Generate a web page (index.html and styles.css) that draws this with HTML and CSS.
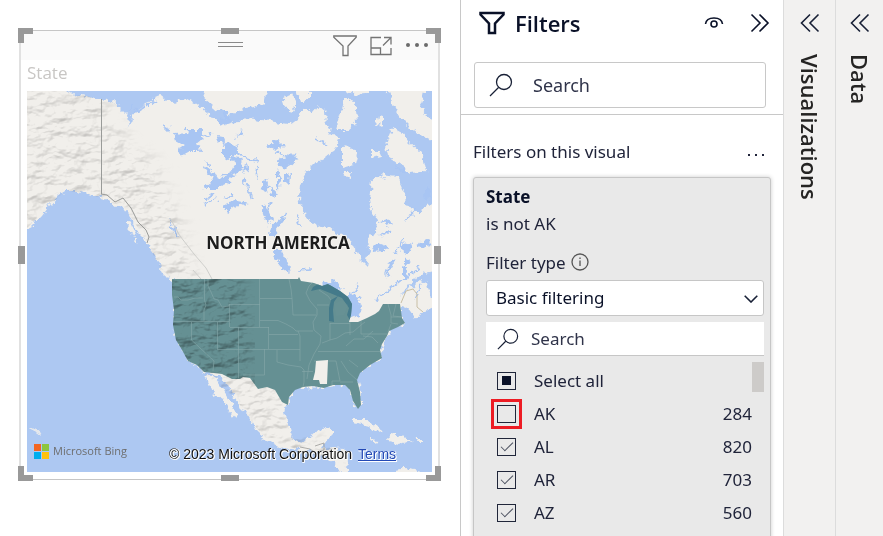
FILE: index.html
```html
<!DOCTYPE html>
<html lang="en">
<head>
<meta charset="utf-8">
<title>State filter</title>
<link rel="stylesheet" href="styles.css">
</head>
<body>
<div class="app">
  <main class="report">
    <section class="visual" aria-label="State map">
      <header class="visual-header">
        <span class="grip"></span>
        <div class="visual-tools">
          <button type="button" aria-label="Filters"><svg width="24" height="22" viewBox="0 0 24 22"><path d="M.8 1h22.4v1.2L15 11v9.5h-5V11L.8 2.200z"/></svg></button>
          <button type="button" aria-label="Focus mode"><svg width="22" height="20" viewBox="0 0 22 20"><path d="M11 1.500H1v17h20V12M1 12h9.500v6.500M13 9.500l8-8M14 1.500h7v7"/></svg></button>
          <button type="button" aria-label="More options"><svg class="dots" width="24" height="20" viewBox="0 0 24 20"><circle cx="3" cy="9" r="2"/><circle cx="12" cy="9" r="2"/><circle cx="21" cy="9" r="2"/></svg></button>
        </div>
      </header>
      <h2 class="visual-title">State</h2>
      <div class="map">
        <svg class="map-art" viewBox="27 91 405 381" preserveAspectRatio="xMidYMid slice">
          <defs>
            <filter id="coast" x="0" y="0" width="100%" height="100%">
              <feTurbulence type="fractalNoise" baseFrequency=".16" numOctaves="3" seed="4" result="n"/>
              <feDisplacementMap in="SourceGraphic" in2="n" scale="9" xChannelSelector="R" yChannelSelector="G"/>
            </filter>
            <filter id="relief" x="0" y="0" width="100%" height="100%" color-interpolation-filters="sRGB">
              <feTurbulence type="fractalNoise" baseFrequency=".05 .09" numOctaves="4" seed="8" result="n"/>
              <feDiffuseLighting in="n" surfaceScale="6" diffuseConstant="1.15" lighting-color="#fff" result="l"><feDistantLight azimuth="235" elevation="60"/></feDiffuseLighting>
              <feColorMatrix in="l" type="saturate" values="0" result="g"/>
              <feGaussianBlur in="SourceAlpha" stdDeviation="8" result="a"/>
              <feComposite in="g" in2="a" operator="in"/>
            </filter>
            <clipPath id="land"><path d="M27 91H67L90 97 112 101 127 115 129 128 148 103 162 95 190 100 230 279H172L160 268 146 240 125 208 95 196 66 190 50 205 27 228Z"/></clipPath>
            <clipPath id="mex"><path d="M203 373 222 374 232 379 243 377 250 378 258 388 267 387 275 390 288 405 286 420 293 440 318 434 330 427 322 447 345 449 346 472 335 463 300 450 268 440 254 425 235 398Z"/></clipPath>
            <clipPath id="usa"><path id="usa-shape" d="M172 279H298L299 277 301 281 314 283 322 286 328 284 340 291 348 297 352 304 351 315 349 322 358 322 367 318 375 314 379 311 383 304H400L402 318 405 323 398 327 389 331 387 336 382 344 380 350 382 358 370 365 360 373 357 380 360 392 361 405 358 409 353 401 350 390 345 385 333 385 324 388 313 386 303 387 295 390 289 397 288 405 282 402 275 390 267 387 258 389 250 378 243 377 240 379 232 379 222 374 214 373 204 372 197 365 188 361 182 350 176 340 173 325 174 310 172 295Z"/></clipPath>
          </defs>
          <rect x="27" y="91" width="405" height="381" fill="#adc8f2"/>
          <g filter="url(#coast)">
            <g fill="#f1efeb">
              <path d="M15 80H60L67 91 80 95 90 97 101 99 112 101 120 108 127 115 129 128 131 118 140 108 148 103 155 97 160 95 165 99 172 102 186 99 196 104 203 110 212 117 220 122 240 121 247 118 262 120 275 122 290 124 298 118 305 107 312 113 318 106 325 112 326 125 332 133 340 137 335 150 325 158 316 162 308 170 303 176 300 184 299 200 303 207 308 220 318 225 330 228 340 235 350 240 357 253 362 262 366 266 369 250 368 238 377 232 378 220 372 212 370 200 372 180 378 176 384 180 392 177 400 184 405 195 406 205 412 212 420 212 428 205 440 203V270L425 273 415 279 408 287 401 297 410 288 420 280 427 284 430 297 440 296V305L425 312 415 318 408 308 402 306 402 318 405 323 389 331 381 350 382 358 360 372 357 380 361 392 361 405 357 408 348 387 341 385 324 388 303 387 295 390 289 398 285 412 290 430 293 440 300 442 312 437 318 430 332 427 332 432 327 440 322 448 345 449 348 460 346 480H344L335 463 318 452 300 450 282 448 268 440 260 436 254 425 245 412 235 398 228 385 220 376 203 372 197 365 188 360 182 348 176 338 174 325 175 310 174 295 174 281 165 276 160 268 157 258 150 248 146 240 138 232 132 220 125 210 117 206 105 199 95 196 85 193 75 190 66 190 58 196 50 205 42 216 33 225 15 234Z"/>
              <path d="M203 97 208 85H268L265 101 255 107 240 110 230 115 222 112 213 106ZM284 98l8-4 4 8-3 10-7-2zM297 90l14 1 0 8-10 3zM345 98l8 2 3 9 1 14-8 7-13 0 4-14zM378 115l6 1 0 8-8 2zM342 148l8-2 8 9-2 8-14 4zM385 87H425L421 106 427 117 440 124V145L424 136 410 128 400 118 394 107ZM393 128 402 133 409 142 422 154 426 171 411 173 402 166 388 156 386 145ZM340 85h28v9l-15 1zM206 376l9 2 8 11 8 14 7 15-5-2-11-17-9-6zM371 151l8 0 2 5-10 2zM345 172l7 0-2 7-7-2zM378 175l20 2 6 12-9-2z"/>
              <path d="M353 419l12 0 11 7 8 5-8 1-8-7-15-3zM390 434l11 2 11 5-14 3-9-2zM369 439l9 1-2 3-8-2zM418 439h5v3h-6zM385 208l-4 5 7 2zM396 470l10-2 14 4-24 6z"/>
              <path d="M29 426l9 3 4 7-5-2z" opacity=".8"/>
              <path d="M126 222l6 2 4 12-6-4zM133 236l5 10-5-6zM157 265l12 9 5 7-13-8z"/>
            </g>
            <g fill="#a8c5f3">
              <path d="M174 134l12-1 2-3 14 0 0 9-5 4 3 8-10 0-9 5-3-6 7-4-9-5zM163 124l6 3 4 7-5-2zM217 135l5 1 3 9-6-3zM219 120l6-1-3-8h6l2 12-9 3zM203 166l8 3 9 14-10-7zM202 188l8-3 3-8 8 2 7-6 9 2-10 7-8 6-9 0zM223 205l14-4 11 2-14 4-7 5zM261 207l8 3 4 9-6 6zM271 226l12-10 2 4-8 7-3 9-5-1zM275 250l8 0 3 10 6 9-3 4-9-8-7-10zM284 262l3 10-5-2zM224 146l7-3 8 5-6 8-9 3zM240 130l4 5-7 3zM268 145l9-4 7 5-7 5zM277 159l12-4 9 3-9 10-8-1zM260 184l6-6 3 9-4 6zM277 170l4 7-1 13-3-5zM231 157l10 1 3 10-8 1zM247 164l3 8-8 2zM270 188l8 4-2 7-4-4zM285 173l5 1-1 9-4 1zM221 176l15-9 8 3-12 4zM322 282l13-1 8 8-6 3-14-2zM349 292l8 5 5 9-2 9-9 3-4-13zM372 247l10-3 8 3-8 4-9 1zM401 247l8-6 4 3-4 11-7-1zM418 243l10-2 4 4-11 3zM404 257l7 4-3 6-4-4zM388 267l4-8 4-1-6 12-4 9zM402 267l5 1-1 12-4-2zM380 222l10-3 4 4-8 2zM424 191l3-5 4 10-6 6z"/>
              <g stroke="#a8c5f3" stroke-width="1.600" fill="none"><path d="M147 106l8-7M125 111l9-5M164 128l6 6M204 206l13-8M224 198l9-4M170 219l7 16M145 106l-9 6M200 138l13-6M222 145l10 2M206 161l5 5M242 179l7 8 2 11M258 166l-2 12M287 159l8-5M244 157l14 4M262 205l5 8M286 213l-5 11M275 153l18 3M315 138l11 7M237 151l5 5M380 236l10-5M415 210l-8 10M404 240l-10 14M422 285l-9 14M396 168l13 3M360 286l-8 6M375 300l25-19 20-14M270 200l-3 12M214 193l-9 7M296 215l4 12M300 270l12-1"/></g>
            </g>
          </g>
          <g class="relief" clip-path="url(#land)"><path filter="url(#relief)" d="M0 85H95L130 145 155 160 180 220 205 300H150L120 210 60 240H0Z"/></g>
          <g class="relief" clip-path="url(#mex)"><path filter="url(#relief)" d="M190 360H290L295 435 350 445V472H290L250 440Z"/></g>
          <path class="border" d="M101.500 99V194M101 194l6 1 8 7 8-4 8 10 7 14 8 8 3 7-2 6"/>
          <path class="range" d="M170 218l10 18 14 18 12 14 6 11M193 270l8 9"/>
          <path class="border gold" d="M401 303l5-12 7-2 4 5 0 13 6 5"/>
          <use href="#usa-shape" fill="#659093"/>
          <g class="relief us" clip-path="url(#usa)"><path filter="url(#relief)" d="M150 260H235L250 310 255 400H150Z"/></g>
          <g clip-path="url(#usa)">
            <path fill="#447a8a" d="M313 287l9-5 14 5 12 8 7 12-4 15-4-7 2-7-7-10-12-5-10-4-9 2zM331 300l7-4-4 6-1 8 1 12-5-1 0-13z"/>
            <path fill="#6d9598" d="M334 304l8-4 6 5-4 10-8 1z" opacity=".3"/>
            <path class="states" d="M174 297l4 0 3 3 7 0 7-2H203M204.500 279V300L206 305 204 310V321M208 279v7l3 6 3 7 4 1 4 7 7-1V304M229.500 304V327M173 321.500H229M191.500 322V340L214 361 213 371M217.500 322V349M217 349.500H300M229 304.500H260M259.500 279V327M260 298.500H292M230 327.500H269M268.500 327V349M238.500 327V378M264.500 349V375H243M289 279l2 10 1 9 1 17M260 320.500H278L286 324 293 328M293 315H316M293 328l3 3H313M269 334.500H298M298 331l2 5 0 25M277 350V362L288 365 301 367M301 367l3 3V382L303 387M302 371.500H313M316 279l-7 7-3 7 4 8 7 8 0 6-4 7 1 8 7 6-1 8-6 10-5 11-2 14M319 290l9 6 3 4M317 305H329M330 323V340M330 323.500H350M350 322V335M322 343l8-3 7-2 8-5 8-1 8-7 4-3M318 351.500H381M314 361H336L340 381H332V385M341 361l7 11 9 8M349 360l9 7M346 346l8-7 10 0 9-8M361 321V334H388M363 336l9 1 6 6M388 304l3 11 0 8 7 1M396 304l-3 12 9 1M391 317H401M391 324l-3 8M340 382H353"/>
          </g>
          <path fill="#f1efeb" d="M316 361 328 360 327 384 320 384 319 380 313 380 315 372Z"/>
          <path fill="none" stroke="#9a9a98" stroke-width=".8" d="M315 446l9-3v7l-7 2M300 447l10 2 9 6"/>
          <text class="continent" x="278" y="249" text-anchor="middle">NORTH AMERICA</text>
        </svg>
        <footer class="map-footer">
          <span class="brand"><svg width="15" height="15" viewBox="0 0 15 15"><path fill="#f26522" d="M0 0h7v7H0z"/><path fill="#8dc63f" d="M8 0h7v7H8z"/><path fill="#00aeef" d="M0 8h7v7H0z"/><path fill="#ffc20e" d="M8 8h7v7H8z"/></svg>Microsoft Bing</span>
          <span class="credit">© 2023 Microsoft Corporation <a href="#terms">Terms</a></span>
        </footer>
      </div>
      <i class="handle corner tl"></i><i class="handle corner tr"></i><i class="handle corner bl"></i><i class="handle corner br"></i>
      <i class="handle bar top"></i><i class="handle bar bottom"></i><i class="handle side left"></i><i class="handle side right"></i>
    </section>
  </main>

  <aside class="filters">
    <header class="pane-header">
      <svg class="funnel" width="26" height="24" viewBox="0 0 26 24"><path d="M1.500 2h23v1.500L16 12.500V22h-6v-9.500L1.500 3.500z"/></svg>
      <h1>Filters</h1>
      <button type="button" aria-label="Show filter pane to readers"><svg width="20" height="14" viewBox="0 0 20 14"><path d="M1.500 8C2 4 5.500 2 10 2s8 2 8.500 6"/><circle cx="10" cy="8" r="3"/></svg></button>
      <button type="button" aria-label="Collapse filters"><svg width="20" height="20" viewBox="0 0 20 20"><path d="M1.500 1.500 10 10l-8.500 8.500M9.500 1.500 18 10l-8.500 8.500"/></svg></button>
    </header>
    <div class="pane-search">
      <label class="search">
        <svg width="24" height="24" viewBox="0 0 24 24"><circle cx="15" cy="9" r="7.500"/><path d="M9.500 14.500 1 23"/></svg>
        <input type="search" placeholder="Search" aria-label="Search filters">
      </label>
    </div>
    <div class="section-head">
      <h2>Filters on this visual</h2>
      <button type="button" aria-label="More filter options"><svg class="dots" width="18" height="4" viewBox="0 0 18 4"><path d="M1 1h2v2H1zM8 1h2v2H8zM15 1h2v2h-2z"/></svg></button>
    </div>
    <section class="card">
      <h3>State</h3>
      <p class="summary">is not AK</p>
      <div class="type-label"><label for="filter-type">Filter type</label>
        <svg width="18" height="18" viewBox="0 0 18 18"><circle cx="9" cy="9" r="8"/><path d="M9 7.500V13M9 4.500V6"/></svg></div>
      <div class="type">
        <select id="filter-type"><option>Basic filtering</option><option>Advanced filtering</option><option>Top N</option></select>
        <svg width="14" height="8" viewBox="0 0 14 8"><path d="M.7.700 7 7 13.300.700"/></svg>
      </div>
      <label class="search value-search">
        <svg width="22" height="22" viewBox="0 0 24 24"><circle cx="15" cy="9" r="7.500"/><path d="M9.500 14.500 1 23"/></svg>
        <input type="search" placeholder="Search" aria-label="Search values">
      </label>
      <div class="values">
        <ul>
          <li><label><input type="checkbox" class="partial">Select all</label></li>
          <li><label><input type="checkbox" class="marked">AK</label><span>284</span></li>
          <li><label><input type="checkbox" checked>AL</label><span>820</span></li>
          <li><label><input type="checkbox" checked>AR</label><span>703</span></li>
          <li><label><input type="checkbox" checked>AZ</label><span>560</span></li>
        </ul>
        <i class="thumb"></i>
      </div>
    </section>
  </aside>

  <button type="button" class="rail"><svg width="20" height="20" viewBox="0 0 20 20"><path d="M10 1.500 1.500 10l8.500 8.500M18.500 1.500 10 10l8.500 8.500"/></svg><span>Visualizations</span></button>
  <button type="button" class="rail"><svg width="20" height="20" viewBox="0 0 20 20"><path d="M10 1.500 1.500 10l8.500 8.500M18.500 1.500 10 10l8.500 8.500"/></svg><span>Data</span></button>
</div>
</body>
</html>
```
FILE: styles.css
```css
* { box-sizing: border-box; }
body {
  margin: 0;
  background: #fff;
  color: #20243a;
  font: 17px/27px "Noto Sans", "Open Sans", sans-serif;
}
h1, h2, h3, p, ul { margin: 0; padding: 0; font: inherit; }
ul { list-style: none; }
button { border: 0; padding: 0; background: none; font: inherit; color: inherit; }
svg { display: block; flex: none; fill: none; stroke: #182036; stroke-width: 1.3; }
.dots { fill: currentColor; stroke: none; }

.app { display: flex; height: 100vh; overflow: hidden; }

/* Report canvas */
.report { flex: 1; min-width: 0; padding: 30px 20px 0 19px; }
.visual {
  position: relative;
  border: 2px solid #e1e1e1;
  border-width: 1px 2px;
  border-top-color: #c6c6c6;
  border-bottom-color: #c6c6c6;
  padding-bottom: 7px;
}
.visual-header {
  position: relative;
  display: flex;
  justify-content: flex-end;
  height: 29px;
  padding-right: 9px;
  background: #fafafa;
}
.grip {
  position: absolute;
  left: 50%;
  top: 11px;
  width: 25px;
  height: 5px;
  margin-left: -12px;
  border: solid #8a8a8a;
  border-width: 1px 0;
}
.visual-tools { display: flex; align-items: center; gap: 13px; color: #6b6b6b; }
.visual-tools svg { stroke: #747474; }
.visual-tools .dots { stroke: none; }
.visual-title {
  height: 31px;
  padding-left: 6px;
  color: #c8c6c4;
  font: 17px/26px "Open Sans", sans-serif;
}
.map { position: relative; margin: 0 6px; aspect-ratio: 405 / 381; overflow: hidden; }
.map-art { width: 100%; height: 100%; stroke: none; }
.relief { fill: #000; mix-blend-mode: multiply; opacity: .2; }
.relief.us { opacity: .4; }
.border, .range { fill: none; stroke: #999b99; stroke-width: 1; }
.range { stroke: #cfcfcc; }
.gold { stroke: #c9bfa5; }
.states { fill: none; stroke: #86a8aa; stroke-width: .6; }
.continent { font: 700 17px "Noto Sans", sans-serif; fill: #1d1d1d; stroke: #f6f5f2; stroke-width: 2px; paint-order: stroke; }
.map-footer {
  position: absolute;
  inset: auto 0 0 0;
  display: flex;
  align-items: center;
  gap: 42px;
  padding: 0 7px 6px;
  font: 14px/21px "Liberation Sans", sans-serif;
  white-space: nowrap;
}
.brand { display: flex; align-items: center; gap: 4px; margin-bottom: 7px; font: 11px/16px "Open Sans", sans-serif; color: #6e6e6e; }
.brand svg { stroke: none; }
.credit { color: #111; text-shadow: 1px 1px #fff, 0 1px #fff, 1px 0 #fff; }
.credit a { margin-left: 2px; color: #2349b5; }

/* Selection handles */
.handle { position: absolute; background: #999; }
.corner { width: 15px; height: 15px; background: none; border: 0 solid #999; }
.tl { left: -3px; top: -3px; border-width: 6px 0 0 6px; }
.tr { right: -3px; top: -3px; border-width: 6px 6px 0 0; }
.bl { left: -3px; bottom: -2px; border-width: 0 0 6px 6px; }
.br { right: -3px; bottom: -2px; border-width: 0 6px 6px 0; }
.bar { left: 50%; width: 18px; height: 6px; margin-left: -9px; }
.side { top: 50%; width: 7px; height: 18px; margin-top: -9px; }
.top { top: -3px; }
.bottom { bottom: -2px; }
.left { left: -3px; }
.right { right: -3px; }

/* Filters pane */
.filters { flex: none; width: 323px; border-left: 1px solid #c8c8c8; }
.pane-header { display: flex; align-items: center; height: 46px; padding: 0 13px 0 18px; }
.pane-header h1 { flex: 1; padding: 0 0 0 10px; color: #0a1128; font: 600 22px/32px "Open Sans", sans-serif; }
.pane-header button + button { margin-left: 26px; }
.pane-header svg { stroke: #0a1128; stroke-width: 1.6; }
.pane-header .funnel { stroke-width: 2.5; }
.pane-search { padding: 16px 17px 6px 13px; border-bottom: 1px solid #c8c8c8; font-size: 18px; }
.search { display: flex; align-items: center; background: #fff; }
.search input {
  flex: 1;
  min-width: 0;
  border: 0;
  padding: 0;
  background: none;
  outline: 0;
  font: inherit;
  color: inherit;
}
.search input::placeholder { color: #30344a; opacity: 1; }
.pane-search .search { height: 46px; gap: 20px; padding-left: 14px; border: 1px solid #c8c8c8; border-radius: 3px; }
.section-head { display: flex; align-items: center; justify-content: space-between; height: 62px; padding: 10px 18px 0 12px; }
.section-head button { padding-top: 8px; }

.card {
  height: 480px;
  margin: 0 12px;
  padding: 5px 6px 0 12px;
  border: 1px solid #c6c6c6;
  border-radius: 3px;
  background: #e9e9e9;
  box-shadow: 0 0 4px #ccc;
}
.card h3 { color: #0a1128; font-weight: 700; }
.type-label { display: flex; align-items: center; gap: 5px; margin-top: 12px; }
.type-label svg { margin-bottom: 2px; stroke: #555; }
.type { position: relative; margin-top: 4px; }
.type select {
  appearance: none;
  display: block;
  width: 100%;
  height: 36px;
  padding: 0 30px 2px 9px;
  border: 1px solid #c6c6c6;
  border-radius: 3px;
  background: #fff;
  color: #0a1128;
  font: inherit;
}
.type svg { position: absolute; right: 6px; top: 15px; stroke-width: 1.6; }
.value-search { height: 34px; margin-top: 6px; padding-left: 11px; gap: 12px; border-bottom: 1px solid #c6c6c6; }

.values { position: relative; padding: 8px 12px 0 11px; }
.values li { display: flex; align-items: center; justify-content: space-between; height: 33px; }
.values label { display: flex; align-items: center; gap: 18px; }
.values input {
  appearance: none;
  display: grid;
  place-items: center;
  width: 19px;
  height: 18px;
  margin: 0;
  border: 1px solid #20263a;
}
.values .partial::before { content: ""; width: 9px; height: 9px; background: #0a1128; }
.values input:checked::before {
  content: "";
  width: 11px;
  height: 5px;
  margin-bottom: 4px;
  border: solid #4c5160;
  border-width: 0 0 1px 1px;
  transform: rotate(-45deg);
}
.values .marked { outline: 3px solid #ed1c24; outline-offset: 3px; }
.thumb { position: absolute; right: 0; top: 6px; width: 12px; height: 30px; background: #cdcbc9; }

/* Collapsed panes */
.rail {
  flex: none;
  display: flex;
  flex-direction: column;
  align-items: center;
  gap: 21px;
  width: 52px;
  padding-top: 13px;
  border-left: 1px solid #dcdcdc;
  background: #f2f1f0;
  color: #252423;
}
.rail + .rail { width: 48px; }
.rail svg { stroke-width: 1.6; }
.rail span { writing-mode: vertical-rl; font: 600 22px/34px "Open Sans", sans-serif; }
```
